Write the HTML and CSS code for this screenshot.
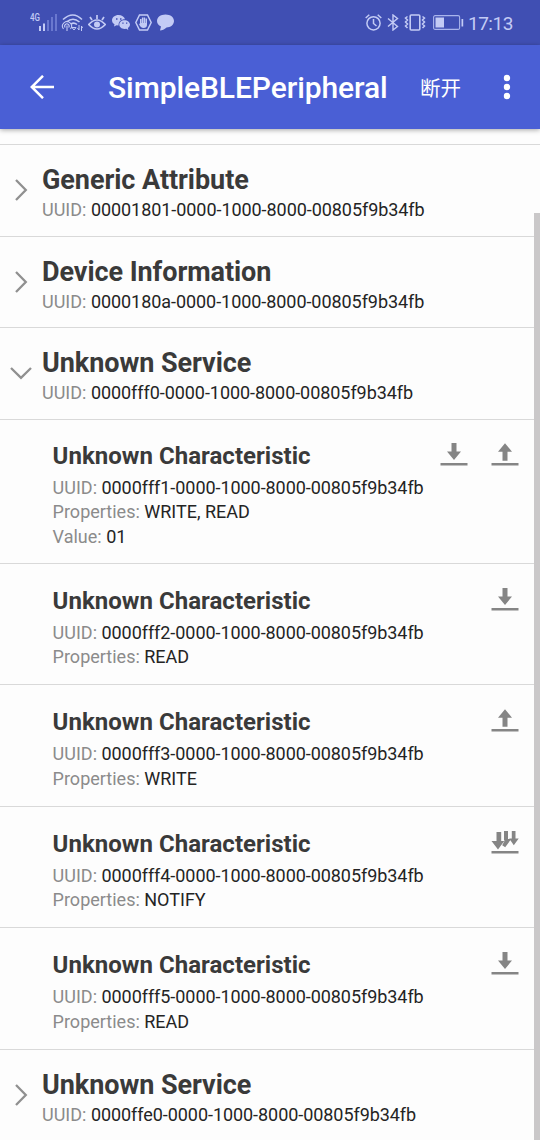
FILE: index.html
```html
<!DOCTYPE html>
<html lang="zh-CN">
<head>
<meta charset="utf-8">
<title>SimpleBLEPeripheral</title>
<link rel="stylesheet" href="styles.css">
</head>
<body>
<svg class="defs" aria-hidden="true">
  <symbol id="chevron" viewBox="0 0 24 24"><path d="M7 2l9.800 10L7 22" fill="none" stroke="#909090" stroke-width="2.300"/></symbol>
  <symbol id="read" viewBox="0 0 28 24"><path d="M11.500 0h5v8.500H21l-7 8.500-7-8.500h4.500zM.5 20h27v2.500H.5z" fill="#858585"/></symbol>
  <symbol id="write" viewBox="0 0 28 24"><path d="M14 .2L21 8.700h-4.500v9h-5v-9H7zM.5 20h27v2.500H.5z" fill="#858585"/></symbol>
  <symbol id="notify" viewBox="0 0 28 24"><path d="M5.500 1h4.700v9h3.100L7 18.500.5 10h5zM13 0h4v8h3.200l-6 8.200-3-2 2.600-4.700H13zM20.800 0h3.700v7.500h3.200L22.800 14.300 18.200 7.500h2.600zM.5 20h27v2.500H.5z" fill="#858585"/></symbol>
</svg>
<div class="phone">
  <div class="status">
    <div class="status-left">
      <span class="net">4G</span>
      <svg class="signal" viewBox="0 0 18 17"><path d="M0 12h2v5H0zM4 9.500h2V17H4z" fill="#c3cbf5"/><path d="M8 6h2v11H8zM12 3h2v14h-2zM16 0h2v17h-2z" fill="#6a78cf"/></svg>
      <svg class="wifi" viewBox="0 0 22 17" fill="none" stroke="#c3cbf5" stroke-width="1.600"><path d="M2 5.500Q12 -3.500 21 5.500M5.500 8Q12 2.500 18.500 8M10 10q3-2 6 .5"/><path d="M2.500 15a4.500 4.500 0 1 1 7 0M4.200 13.500a2.200 2.200 0 1 1 3.400 0M6 11.500V17" stroke-width="1.100"/><path d="M11 13.500h4L13 16zM18 11v5l-1.500-2M20.500 17v-5l1 2" stroke-width="1"/></svg>
      <svg class="eye" viewBox="0 0 18 17" fill="none" stroke="#c3cbf5" stroke-width="1.700"><path d="M.7 10.500Q9 1.500 17.300 10.500 9 19.500.7 10.500zM9 5V1M4 6L2 3M14 6l2-3"/><circle cx="9" cy="10.500" r="3" fill="#c3cbf5" stroke="none"/></svg>
      <svg class="wechat" viewBox="0 0 18 17"><path d="M6.500 1C3 1 0 3.300 0 6.300c0 1.800 1 3.200 2.500 4L2 12.500l2.500-1.300 2 .3C6.500 7.500 9 5.300 13 5.300 12.300 2.700 9.700 1 6.500 1z" fill="#c3cbf5"/><path d="M12.500 6.200c-3 0-5.200 2-5.200 4.400s2.200 4.400 5.200 4.400l1.800-.3 2 1.300-.4-2c1.200-.8 2.100-2 2.100-3.400 0-2.400-2.500-4.400-5.500-4.400z" fill="#c3cbf5"/><path d="M4 4.200h1.500v1.500H4zM8 4.200h1.500v1.500H8zM10.300 8.500h1.300v1.300h-1.300zM14 8.500h1.300v1.300H14z" fill="#404fb3"/></svg>
      <svg class="hand" viewBox="0 0 17 17"><path d="M4.500 1h8l3.700 7.500-3.700 7.500h-8L.8 8.500z" fill="none" stroke="#c3cbf5" stroke-width="1.500"/><path d="M5 5h1.500v4h.4V3.500h1.400V9h.4V3.500h1.400V9h.4V4.500H12V11c0 2-1.400 3-3.300 3C6.500 14 5 12.500 4 10l1-.5z" fill="#c3cbf5"/></svg>
      <svg class="bubble" viewBox="0 0 17 17"><path d="M8.500.500c5 0 8.500 2.800 8.500 6.500s-3.500 6.500-7.500 6.500C7.500 15.500 5 16.500 3 16.500l1-4C1.500 11.500 0 9.500 0 7 0 3.300 3.500.500 8.500.500z" fill="#c3cbf5"/></svg>
    </div>
    <div class="status-right">
      <svg class="alarm" viewBox="0 0 17 17" fill="none" stroke="#c3cbf5" stroke-width="1.500"><circle cx="8.500" cy="9.300" r="6.600"/><path d="M8.500 5v4.500l3 2.500M.7 4L4.300.8M16.300 4L12.700.8"/></svg>
      <svg class="bt" viewBox="0 0 12 17"><path d="M1 4.500l9.500 8L6 16V1l4.500 3.500L1 12.500" fill="none" stroke="#c3cbf5" stroke-width="1.400"/></svg>
      <svg class="vibrate" viewBox="0 0 22 17" fill="none" stroke="#c3cbf5" stroke-width="1.600"><rect x="6.200" y="1" width="9.600" height="15" rx="1"/><path d="M3.500 2.500l-2 1.500 2 2-2 2 2 2-2 2 2 2M18.500 2.500l2 1.500-2 2 2 2-2 2 2 2-2 2" stroke-width="1.500"/></svg>
      <svg class="battery" viewBox="0 0 31 15"><rect x=".6" y=".6" width="26" height="13.800" rx="1.500" fill="none" stroke="#a9b4ec" stroke-width="1.100"/><path d="M2.500 2.500H11v10H2.500zM28.500 4h1.700v7.500h-1.700z" fill="#c3cbf5"/></svg>
      <span class="time">17:13</span>
    </div>
  </div>
  <header class="bar">
    <svg class="back" viewBox="0 0 24 24"><path d="M24 12H1.500M13 .8L1.700 12 13 23.200" fill="none" stroke="#fff" stroke-width="2.500"/></svg>
    <h1 class="title">SimpleBLEPeripheral</h1>
    <span class="action">断开</span>
    <svg class="more" viewBox="0 0 8 26" fill="#fff"><circle cx="4" cy="4" r="3.200"/><circle cx="4" cy="13" r="3.200"/><circle cx="4" cy="22" r="3.200"/></svg>
  </header>
  <main class="list">
    <section class="service"><svg class="chev"><use href="#chevron"/></svg><div><h2>Generic Attribute</h2><p class="uuid">UUID: <b>00001801-0000-1000-8000-00805f9b34fb</b></p></div></section>
    <section class="service"><svg class="chev"><use href="#chevron"/></svg><div><h2>Device Information</h2><p class="uuid">UUID: <b>0000180a-0000-1000-8000-00805f9b34fb</b></p></div></section>
    <section class="service"><svg class="chev open"><use href="#chevron"/></svg><div><h2>Unknown Service</h2><p class="uuid">UUID: <b>0000fff0-0000-1000-8000-00805f9b34fb</b></p></div></section>
    <section class="char tall"><div><h3>Unknown Characteristic</h3><p class="uuid">UUID: <b>0000fff1-0000-1000-8000-00805f9b34fb</b></p><p>Properties: <b>WRITE, READ</b></p><p>Value: <b>01</b></p></div><div class="ops"><svg><use href="#read"/></svg><svg><use href="#write"/></svg></div></section>
    <section class="char"><div><h3>Unknown Characteristic</h3><p class="uuid">UUID: <b>0000fff2-0000-1000-8000-00805f9b34fb</b></p><p>Properties: <b>READ</b></p></div><div class="ops"><svg><use href="#read"/></svg></div></section>
    <section class="char"><div><h3>Unknown Characteristic</h3><p class="uuid">UUID: <b>0000fff3-0000-1000-8000-00805f9b34fb</b></p><p>Properties: <b>WRITE</b></p></div><div class="ops"><svg><use href="#write"/></svg></div></section>
    <section class="char"><div><h3>Unknown Characteristic</h3><p class="uuid">UUID: <b>0000fff4-0000-1000-8000-00805f9b34fb</b></p><p>Properties: <b>NOTIFY</b></p></div><div class="ops"><svg><use href="#notify"/></svg></div></section>
    <section class="char"><div><h3>Unknown Characteristic</h3><p class="uuid">UUID: <b>0000fff5-0000-1000-8000-00805f9b34fb</b></p><p>Properties: <b>READ</b></p></div><div class="ops"><svg><use href="#read"/></svg></div></section>
    <section class="service"><svg class="chev"><use href="#chevron"/></svg><div><h2>Unknown Service</h2><p class="uuid">UUID: <b>0000ffe0-0000-1000-8000-00805f9b34fb</b></p></div></section>
  </main>
  <div class="scrollbar"></div>
</div>
</body>
</html>
```

FILE: styles.css
```css
* { box-sizing: border-box; margin: 0; padding: 0; }
body { font-family: Roboto, "Noto Sans CJK SC", sans-serif; background: #fdfdfd; }
svg { display: block; flex: none; }
.defs { display: none; }
.phone { position: relative; width: 540px; height: 1140px; overflow: hidden; display: flex; flex-direction: column; }

.status { height: 45px; flex: none; background: #404fb3; display: flex; justify-content: space-between; padding: 0 27px 0 30px; color: #c3cbf5; }
.status-left, .status-right { display: flex; align-items: center; height: 45px; }
.net { font-size: 10px; line-height: 10px; width: 9px; margin-bottom: 9px; transform: scaleX(.8); transform-origin: left; font-weight: 500; }
.signal { width: 18px; height: 17px; }
.wifi { width: 22px; height: 17px; margin-left: 4px; }
.eye { width: 18px; height: 17px; margin-left: 5px; }
.wechat { width: 18px; height: 17px; margin-left: 6px; }
.hand { width: 17px; height: 17px; margin-left: 5px; }
.bubble { width: 17px; height: 17px; margin-left: 5px; }
.alarm { width: 17px; height: 17px; }
.bt { width: 12px; height: 17px; margin-left: 5px; }
.vibrate { width: 22px; height: 17px; margin-left: 5px; }
.battery { width: 31px; height: 15px; margin-left: 7px; }
.time { font-size: 19px; line-height: 24px; width: 44px; margin: 2px 1px 0 4px; letter-spacing: -.5px; white-space: nowrap; }

.bar { height: 84px; flex: none; background: #4a5fd5; color: #fff; display: flex; align-items: center; padding: 0 29px 0 30px; z-index: 1; box-shadow: 0 1px 5px rgba(0, 0, 0, .35); }
.back { width: 24px; height: 24px; }
.title { font-size: 30px; line-height: 36px; font-weight: 500; letter-spacing: -.09px; margin: 2px 0 0 54px; width: 312px; white-space: nowrap; }
.action { font-size: 20.5px; line-height: 28px; width: 42px; margin-top: 3px; white-space: nowrap; }
.more { width: 8px; height: 26px; margin-left: auto; }

.list { margin-top: 15px; border-top: 1px solid #d9d9d9; color: #8b8b8b; }
.service { height: 91.5px; border-bottom: 1px solid #d9d9d9; display: flex; padding: 19px 0 0 9px; }
.chev { width: 24px; height: 24px; margin: 14px 9px 0 0; }
.chev.open { transform: rotate(90deg); }
h2 { font-size: 27px; line-height: 32px; font-weight: 700; letter-spacing: -.06px; color: #3a3a3a; white-space: nowrap; }
p { font-size: 18px; line-height: 24.5px; white-space: nowrap; }
.service p { line-height: 28px; }
p b { font-weight: 400; color: #242424; }
.uuid b { letter-spacing: -.06px; }
.char { height: 121.5px; border-bottom: 1px solid #d9d9d9; display: flex; justify-content: space-between; padding: 22px 21px 0 52.6px; }
.char.tall { height: 144px; padding-top: 21.3px; }
h3 { font-size: 24px; line-height: 30px; font-weight: 700; letter-spacing: .03px; color: #3a3a3a; margin-bottom: 5px; white-space: nowrap; }
.ops { display: flex; gap: 23px; padding-top: 2.300px; }
.ops svg { width: 28px; height: 24px; }
.scrollbar { position: absolute; right: 0; top: 213px; width: 6px; bottom: 0; background: #cac8c9; }
```
